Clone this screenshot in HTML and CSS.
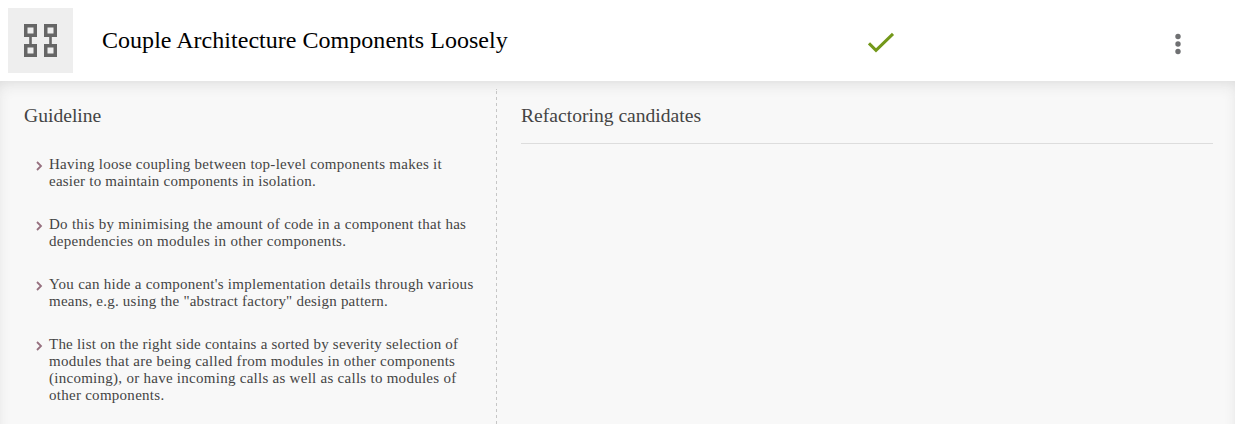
FILE: index.html
```html
<!DOCTYPE html>
<html lang="en">
<head>
<meta charset="utf-8">
<title>Couple Architecture Components Loosely</title>
<link rel="stylesheet" href="styles.css">
</head>
<body>
<header class="header">
  <div class="tile"><svg width="65" height="65" viewBox="0 0 65 65" fill="none" stroke="#666" stroke-width="3.500"><path d="M17.750 17.750h9.500v9.500h-9.500zM37.750 17.750h9.500v9.500h-9.500zM17.750 37.750h9.500v9.500h-9.500zM37.750 37.750h9.500v9.500h-9.500z"/><path d="M22.500 28v9M42.500 28v9" stroke-width="2.600"/></svg></div>
  <h1 class="title">Couple Architecture Components Loosely</h1>
  <svg class="check" width="28" height="22" viewBox="0 0 28 22" fill="none" stroke="#73981a" stroke-width="3"><path d="M1 11.300l7 7L25 1.800"/></svg>
  <svg class="more" width="8" height="22" viewBox="0 0 8 22" fill="#6f7072"><circle cx="4" cy="3.500" r="2.700"/><circle cx="4" cy="11" r="2.700"/><circle cx="4" cy="18.500" r="2.700"/></svg>
</header>
<main class="body">
  <section class="guide">
    <h2 class="heading">Guideline</h2>
    <ul class="list">
      <li class="item"><svg class="chev" width="7" height="10" viewBox="0 0 7 10"><path d="M1 1l4 4-4 4"/></svg><p class="text">Having loose coupling between top-level components makes it<br><span class="snug">easier to maintain components in isolation.</span></p></li>
      <li class="item"><svg class="chev" width="7" height="10" viewBox="0 0 7 10"><path d="M1 1l4 4-4 4"/></svg><p class="text">Do this by minimising the amount of code in a component that has<br><span class="loose">dependencies on modules in other components.</span></p></li>
      <li class="item"><svg class="chev" width="7" height="10" viewBox="0 0 7 10"><path d="M1 1l4 4-4 4"/></svg><p class="text">You can hide a component's implementation details through various<br><span class="snug">means, e.g. using the "abstract factory" design pattern.</span></p></li>
      <li class="item"><svg class="chev" width="7" height="10" viewBox="0 0 7 10"><path d="M1 1l4 4-4 4"/></svg><p class="text"><span class="snug">The list on the right side contains a sorted by severity selection of</span><br>modules that are being called from modules in other components<br>(incoming), or have incoming calls as well as calls to modules of<br>other components.</p></li>
    </ul>
  </section>
  <div class="divider"></div>
  <section class="candidates"><h2 class="heading">Refactoring candidates</h2></section>
</main>
</body>
</html>
```
FILE: styles.css
```css
* { box-sizing: border-box; }
body { margin: 0; height: 424px; overflow: hidden; background: #f8f8f8; font-family: "Liberation Serif", serif; color: #444; }
h1, h2, p, ul { margin: 0; padding: 0; font-weight: 400; }
.header { display: flex; align-items: flex-start; height: 81px; padding: 8px; background: #fff; }
.tile { width: 65px; height: 65px; background: #eee; }
.title { width: 766px; margin-left: 29px; padding-top: 18px; font-size: 24px; line-height: 28px; letter-spacing: 0.03px; color: #000; white-space: nowrap; }
.check { margin-top: 24px; }
.more { margin: 25px 45px 0 auto; }
.body { display: flex; height: 363px; box-shadow: inset 0 6px 16px -5px #d6d6d6; }
.guide { width: 496px; padding: 23px 0 0 24px; }
.heading { font-size: 19.6px; line-height: 24px; }
.list { list-style: none; padding: 28px 0 0 12px; }
.item { display: flex; margin-bottom: 26px; }
.chev { margin: 5px 6px 0 0; fill: none; stroke: #96707f; stroke-width: 1.800; }
.text { font-size: 15px; line-height: 17px; letter-spacing: 0.27px; white-space: nowrap; }
.snug { letter-spacing: 0.22px; }
.loose { letter-spacing: 0.3px; }
.divider { width: 1px; margin-top: 8px; background: repeating-linear-gradient(#c6c6c6 0 3px, transparent 3px 6px) 0 1px; border-top: 1px solid #c6c6c6; background-clip: padding-box; }
.candidates { flex: 1; margin: 23px 22px 0 24px; }
.candidates .heading { height: 40px; border-bottom: 1px solid #ddd; }
```
